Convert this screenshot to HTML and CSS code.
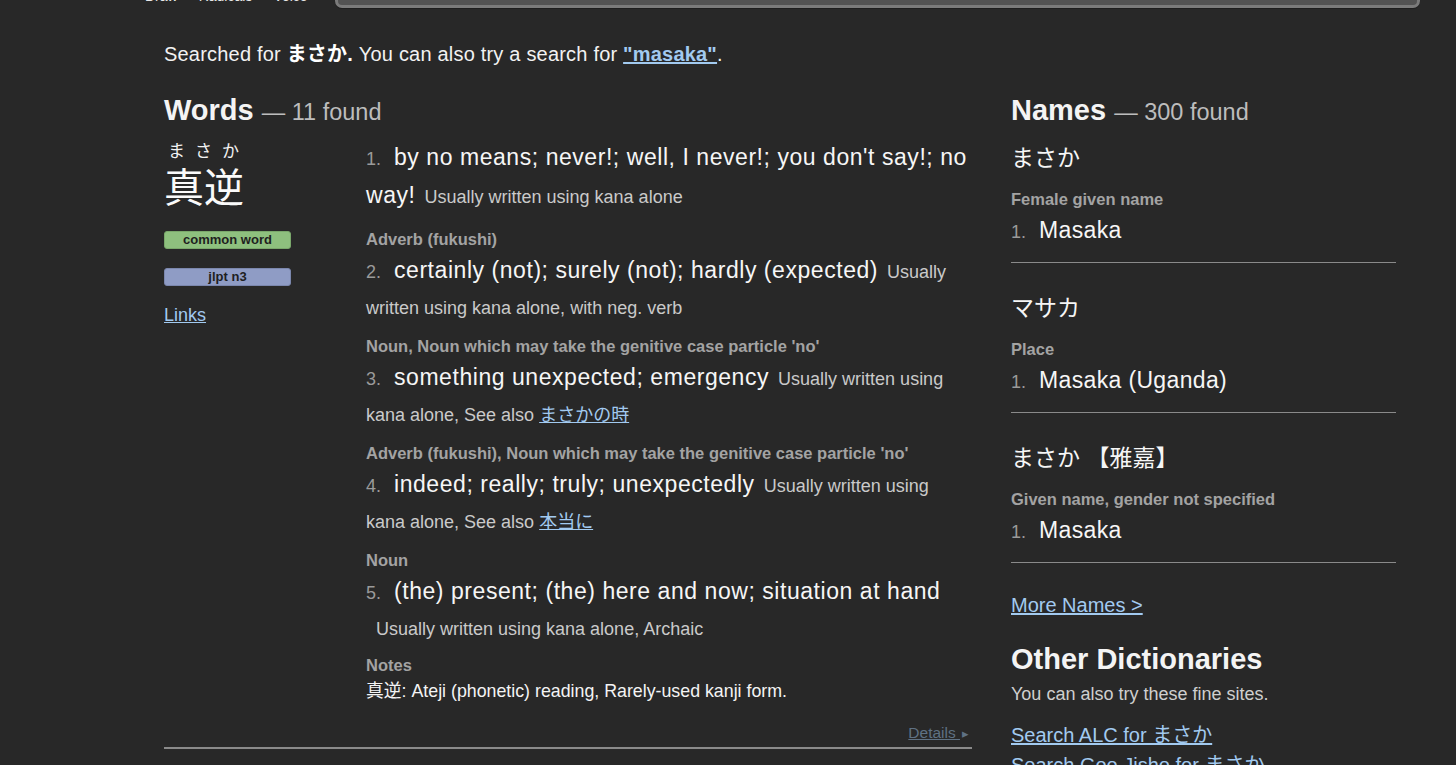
FILE: index.html
```html
<!DOCTYPE html>
<html lang="ja">
<head>
<meta charset="utf-8">
<title>まさか - Jisho</title>
<link rel="stylesheet" href="styles.css">
</head>
<body>
<div class="page">
  <header class="topbar">
    <nav class="input-modes">
      <span>Draw</span><span>Radicals</span><span>Voice</span>
    </nav>
    <div class="search-box"></div>
  </header>

  <p class="searched">Searched for <strong>まさか.</strong> You can also try a search for <a href="#" class="alt-search">"masaka"</a>.</p>

  <div class="results">
    <section class="words">
      <h2 class="section-title">Words <span class="count">— 11 found</span></h2>

      <div class="entry">
        <div class="entry-left">
          <div class="furigana">まさか</div>
          <div class="kanji">真逆</div>
          <span class="badge badge-common">common word</span>
          <span class="badge badge-jlpt">jlpt n3</span>
          <a href="#" class="links">Links</a>
        </div>

        <div class="entry-right">
          <div class="sense first">
            <span class="num">1.</span><span class="meaning">by no means; never!; well, I never!; you don't say!; no way!</span> <span class="info">Usually written using kana alone</span>
          </div>

          <div class="tag">Adverb (fukushi)</div>
          <div class="sense">
            <span class="num">2.</span><span class="meaning">certainly (not); surely (not); hardly (expected)</span> <span class="info">Usually written using kana alone, with neg. verb</span>
          </div>

          <div class="tag">Noun, Noun which may take the genitive case particle 'no'</div>
          <div class="sense">
            <span class="num">3.</span><span class="meaning">something unexpected; emergency</span> <span class="info">Usually written using kana alone, See also <a href="#">まさかの時</a></span>
          </div>

          <div class="tag">Adverb (fukushi), Noun which may take the genitive case particle 'no'</div>
          <div class="sense">
            <span class="num">4.</span><span class="meaning">indeed; really; truly; unexpectedly</span> <span class="info">Usually written using kana alone, See also <a href="#">本当に</a></span>
          </div>

          <div class="tag">Noun</div>
          <div class="sense">
            <span class="num">5.</span><span class="meaning">(the) present; (the) here and now; situation at hand</span> <span class="info info-wrap">Usually written using kana alone, Archaic</span>
          </div>

          <div class="tag notes-label">Notes</div>
          <div class="notes">真逆: Ateji (phonetic) reading, Rarely-used kanji form.</div>
        </div>
      </div>

      <div class="details-row">
        <a href="#" class="details">Details <span class="tri">▸</span></a>
      </div>
    </section>

    <aside class="names">
      <h2 class="section-title">Names <span class="count">— 300 found</span></h2>

      <div class="name-entry">
        <div class="name-reading">まさか</div>
        <div class="tag">Female given name</div>
        <div class="name-sense"><span class="num">1.</span><span class="meaning">Masaka</span></div>
      </div>

      <div class="name-entry">
        <div class="name-reading">マサカ</div>
        <div class="tag">Place</div>
        <div class="name-sense"><span class="num">1.</span><span class="meaning">Masaka (Uganda)</span></div>
      </div>

      <div class="name-entry">
        <div class="name-reading">まさか 【雅嘉】</div>
        <div class="tag">Given name, gender not specified</div>
        <div class="name-sense"><span class="num">1.</span><span class="meaning">Masaka</span></div>
      </div>

      <a href="#" class="more-names">More Names &gt;</a>

      <h2 class="other-title">Other Dictionaries</h2>
      <p class="other-sub">You can also try these fine sites.</p>
      <ul class="other-links">
        <li><a href="#">Search ALC for まさか</a></li>
        <li><a href="#">Search Goo Jisho for まさか</a></li>
      </ul>
    </aside>
  </div>
</div>
</body>
</html>
```

FILE: styles.css
```css
html, body {
  margin: 0;
  padding: 0;
  background: #282828;
  overflow: hidden;
}

body {
  font-family: "Liberation Sans", Arial, "Noto Sans CJK JP", sans-serif;
  color: #f2f2f2;
}

a {
  color: #a2caf0;
  text-decoration: underline;
}

.page {
  padding-left: 164px;
  width: 1232px;
}

/* top bar (scrolled, mostly out of view) */
.topbar {
  display: flex;
  align-items: flex-end;
  width: 1275px;
  height: 40px;
  margin-top: -32px;
  margin-left: -19px;
}

.input-modes {
  flex: none;
  display: flex;
  gap: 21px;
  width: 190px;
  padding-bottom: 4px;
  font-size: 14px;
  line-height: 16px;
  color: #e8e8e8;
}

.search-box {
  flex: none;
  width: 1079px;
  height: 36px;
  border: 3px solid #7b7b7b;
  border-radius: 7px;
  background: #535353;
  box-shadow: 0 1px 0 #1e1e1e;
}

.searched {
  margin: 32px 0 0;
  font-size: 20px;
  line-height: 28px;
  letter-spacing: 0.2px;
  color: #f2f2f2;
}

.searched strong {
  font-weight: bold;
  color: #fff;
}

.alt-search {
  font-weight: bold;
}

.results {
  display: flex;
  gap: 39px;
  margin-top: 24px;
}

.words {
  width: 808px;
  flex: none;
}

.names {
  width: 385px;
  flex: none;
}

.section-title {
  margin: 0;
  font-size: 29px;
  line-height: 36px;
  font-weight: bold;
  color: #f4f4f4;
}

.section-title .count {
  font-size: 23.5px;
  font-weight: normal;
  color: #bdbdbd;
}

/* word entry */
.entry {
  display: flex;
  margin-top: 9px;
}

.entry-left {
  width: 202px;
  flex: none;
  display: flex;
  flex-direction: column;
  align-items: flex-start;
  padding-top: 3px;
}

.furigana {
  font-size: 17px;
  line-height: 20px;
  letter-spacing: 10px;
  padding-left: 4px;
  color: #f2f2f2;
}

.kanji {
  font-size: 40px;
  line-height: 44px;
  margin-top: 4px;
  color: #fafafa;
}

.badge {
  display: block;
  box-sizing: border-box;
  width: 127px;
  height: 18px;
  border-radius: 3px;
  font-size: 13px;
  line-height: 16px;
  font-weight: bold;
  text-align: center;
  color: #1f1f1f;
}

.badge-common {
  margin-top: 21px;
  background: #8ec07e;
  border: 1px solid #7aa86b;
}

.badge-jlpt {
  margin-top: 19px;
  background: #8f9cc5;
  border: 1px solid #7b87ad;
}

.links {
  margin-top: 17px;
  font-size: 18px;
  line-height: 24px;
}

.entry-right {
  width: 606px;
  flex: none;
}

.sense {
  font-size: 18px;
  line-height: 36px;
  color: #cfcfcf;
}

.sense.first {
  padding-bottom: 4px;
}

.sense .num {
  font-size: 18px;
  color: #9a9a9a;
  margin-right: 13px;
}

.sense .meaning {
  font-size: 23px;
  letter-spacing: 0.55px;
  color: #f6f6f6;
}

.sense .info {
  margin-left: 4px;
  color: #cacaca;
}

.sense .info-wrap {
  display: block;
  margin-left: 0;
  padding-left: 10px;
}

.tag {
  font-size: 16.5px;
  line-height: 20px;
  font-weight: bold;
  color: #a3a3a3;
}

.entry-right .tag {
  margin-top: 10px;
  margin-bottom: 3px;
}

.entry-right .notes-label {
  margin-top: 8px;
  margin-bottom: 5px;
}

.notes {
  font-size: 17.8px;
  line-height: 22px;
  color: #f4f4f4;
}

.details-row {
  display: flex;
  justify-content: flex-end;
  margin-top: 21px;
  padding-right: 3px;
  padding-bottom: 3px;
  border-bottom: 2px solid #8a8a8a;
}

.details {
  font-size: 15.5px;
  line-height: 20px;
  color: #5f7183;
}

.details .tri {
  font-size: 13px;
  display: inline-block;
  margin-left: 2px;
}

/* names */
.names .section-title {
  margin-bottom: 13px;
}

.name-entry {
  padding-bottom: 11px;
  border-bottom: 1px solid #8a8a8a;
  margin-bottom: 30px;
}

.name-reading {
  font-size: 23px;
  line-height: 30px;
  color: #f6f6f6;
  white-space: pre;
}

.name-entry .tag {
  margin-top: 16px;
}

.name-sense {
  margin-top: 3px;
  line-height: 36px;
}

.name-sense .num {
  font-size: 18px;
  color: #9a9a9a;
  margin-right: 13px;
}

.name-sense .meaning {
  font-size: 23px;
  letter-spacing: 0.35px;
  color: #f6f6f6;
}

.more-names {
  display: block;
  margin-top: -1px;
  font-size: 20px;
  line-height: 26px;
}

.other-title {
  margin: 23px 0 0;
  font-size: 29px;
  line-height: 36px;
  font-weight: bold;
  color: #f4f4f4;
}

.other-sub {
  margin: 5px 0 0;
  font-size: 18px;
  line-height: 24px;
  color: #cfcfcf;
}

.other-links {
  list-style: none;
  margin: 14px 0 0;
  padding: 0;
}

.other-links li {
  font-size: 20px;
  line-height: 30px;
}
```
